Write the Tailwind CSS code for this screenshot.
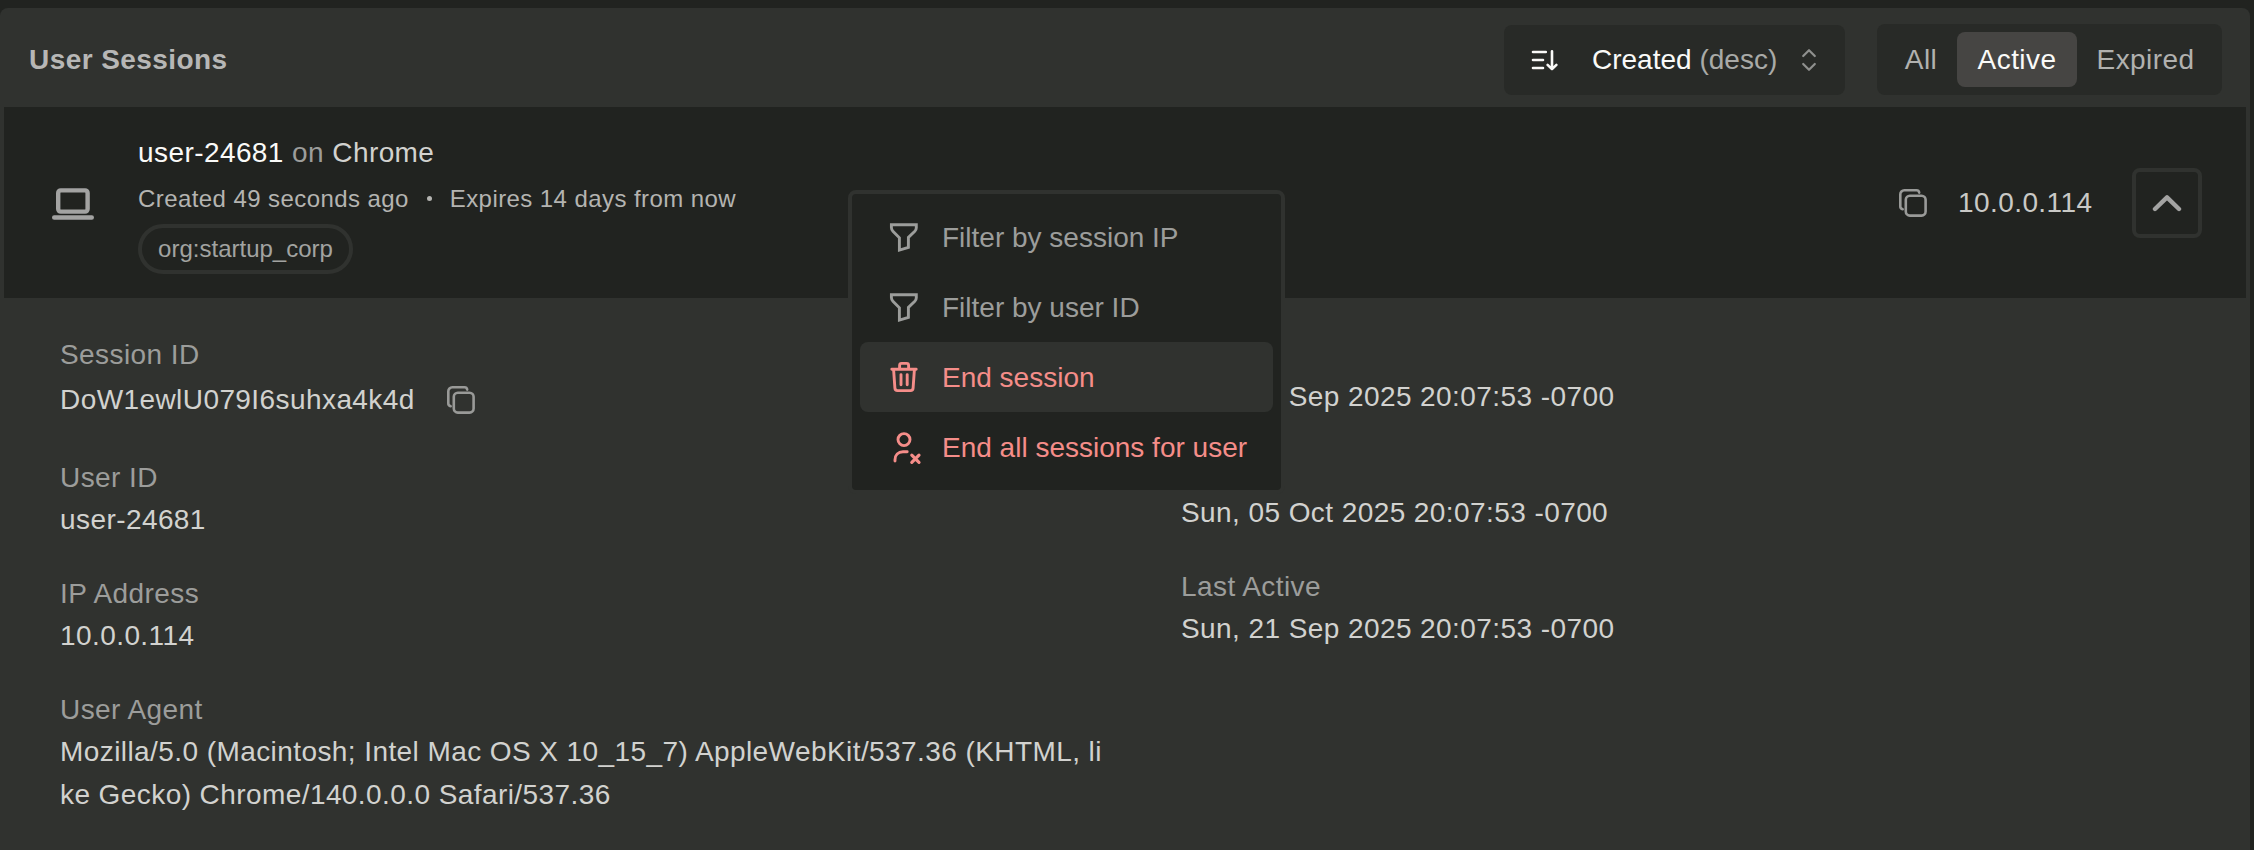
<!DOCTYPE html>
<html lang="en">
<head>
    <meta charset="UTF-8">
    <meta name="viewport" content="width=device-width, initial-scale=1.0">
    <title>User Sessions</title>
    <script src="https://cdn.jsdelivr.net/npm/@tailwindcss/browser@4"></script>
</head>
<body class="bg-[#212320] font-['Liberation_Sans',Arial,sans-serif] text-[28px] leading-[42px] tracking-[0.42px] text-[#d2d2cf]">

<!-- Shared icons -->
<svg class="hidden">
    <symbol id="icon-copy" viewBox="0 0 28 28">
        <rect x="6.8" y="6.8" width="19.8" height="19.8" rx="4"/>
        <path d="M20.2 3.6C19.9 1.9 19 1.3 17.6 1.3H5.3a4 4 0 0 0-4 4V17.6c0 1.4.8 2.3 2.4 2.6"/>
    </symbol>
    <symbol id="icon-filter" viewBox="0 0 32 32">
        <path d="M3.4 3.7h24.9v3c0 1.5-.5 2.6-1.5 3.6L20.4 16.4V26.5L11.4 29.1V16.8L4.9 10.2c-1-1-1.5-2.2-1.5-3.6z"/>
    </symbol>
</svg>

<div class="relative h-[850px] overflow-hidden pt-2 pr-1">
    <div class="h-full rounded-t-lg bg-[#30322f] px-1">

        <!-- Header -->
        <div class="flex h-[99px] items-start pt-4 pr-6 pl-[25px]">
            <h1 class="flex h-[71px] flex-1 items-center font-bold text-[#b7b7b6]">User Sessions</h1>
            <button class="mt-px mr-8 flex h-[70px] w-[341px] items-center rounded-lg bg-[#282a27] pl-[27px] tracking-normal">
                <svg class="size-[28px]" viewBox="0 0 28 28" fill="none" stroke="#fafaf8" stroke-width="2.6" stroke-linecap="round" stroke-linejoin="round">
                    <path d="M2 6h12.8M2 14h10M2 22h10M21 5.2V23M16.6 18.8L21 23.2l4.4-4.4"/>
                </svg>
                <span class="ml-[33px] text-[#fafaf8]">Created <span class="text-[#a9aaa7]">(desc)</span></span>
                <svg class="ml-auto mr-[28px] h-[24px] w-[16px]" viewBox="0 0 16 24" fill="none" stroke="#8f908e" stroke-width="2.2" stroke-linecap="round" stroke-linejoin="round">
                    <path d="M2.2 8L8 2.2 13.8 8M2.2 16L8 21.8l5.8-5.8"/>
                </svg>
            </button>
            <div class="flex h-[71px] w-[345px] rounded-lg bg-[#282a27] p-2 text-[#b1b1af]">
                <button class="w-[72px]">All</button>
                <button class="w-[120px] rounded-lg bg-[#464543] text-[#fafaf8]">Active</button>
                <button class="flex-1">Expired</button>
            </div>
        </div>

        <!-- Session row -->
        <div class="flex h-[191px] bg-[#212320] pt-6 pl-12">
            <svg class="mt-[56px] h-[34px] w-[42px]" viewBox="0 0 42 34" fill="none" stroke="#a3a3a2" stroke-width="4.4" stroke-linecap="round">
                <rect x="6.2" y="3.4" width="29.4" height="21.2" rx="2.5"/>
                <path d="M2.2 30.5h37.6"/>
            </svg>
            <div class="ml-[44px] flex-1">
                <div class="pt-px text-[#9c9d9b]"><span class="text-[#fafaf8]">user-24681</span> on <span class="text-[#d2d2cf]">Chrome</span></div>
                <div class="mt-[7px] flex items-center text-[24px] leading-[35px] text-[#b4b4b1]">
                    <span>Created 49 seconds ago</span>
                    <span class="mr-[18px] ml-[18px] size-[5px] rounded-full bg-[#b4b4b1]"></span>
                    <span>Expires 14 days from now</span>
                </div>
                <span class="mt-2 flex h-[50px] w-[215px] items-center justify-center rounded-full border-4 border-[#30322f] text-[24px] tracking-normal text-[#a2a3a1]">org:startup_corp</span>
            </div>
            <div class="mt-[37px] mr-[44px] flex h-[70px] items-center">
                <svg class="size-[28px]" fill="none" stroke="#999a98" stroke-width="2.6" stroke-linecap="round"><use href="#icon-copy"/></svg>
                <span class="ml-[31px] w-[174px] text-[#c9c9c6]">10.0.0.114</span>
                <button class="flex size-[70px] items-center justify-center rounded-lg border-4 border-[#30322f]">
                    <svg class="h-[18px] w-[30px]" viewBox="0 0 30 18" fill="none" stroke="#a3a3a2" stroke-width="4.4" stroke-linecap="round" stroke-linejoin="round">
                        <path d="M3 15L15 3.4 27 15"/>
                    </svg>
                </button>
            </div>
        </div>

        <!-- Details -->
        <div class="grid grid-cols-[1048px_1fr] gap-x-[73px] pt-9 pl-14">
            <dl class="flex flex-col gap-8">
                <div>
                    <dt class="text-[#9c9d9b]">Session ID</dt>
                    <dd class="flex h-[49px] items-center pb-0.5">
                        <span>DoW1ewlU079I6suhxa4k4d</span>
                        <svg class="ml-8 size-[28px]" fill="none" stroke="#999a98" stroke-width="2.6" stroke-linecap="round"><use href="#icon-copy"/></svg>
                    </dd>
                </div>
                <div>
                    <dt class="text-[#9c9d9b]">User ID</dt>
                    <dd>user-24681</dd>
                </div>
                <div>
                    <dt class="text-[#9c9d9b]">IP Address</dt>
                    <dd>10.0.0.114</dd>
                </div>
                <div>
                    <dt class="text-[#9c9d9b]">User Agent</dt>
                    <dd class="-mt-px leading-[43px] break-all">Mozilla/5.0 (Macintosh; Intel Mac OS X 10_15_7) AppleWebKit/537.36 (KHTML, like Gecko) Chrome/140.0.0.0 Safari/537.36</dd>
                </div>
            </dl>
            <dl class="flex flex-col gap-8">
                <div>
                    <dt class="text-[#9c9d9b]">Created</dt>
                    <dd>Sun, 21 Sep 2025 20:07:53 -0700</dd>
                </div>
                <div>
                    <dt class="text-[#9c9d9b]">Expires</dt>
                    <dd>Sun, 05 Oct 2025 20:07:53 -0700</dd>
                </div>
                <div>
                    <dt class="text-[#9c9d9b]">Last Active</dt>
                    <dd>Sun, 21 Sep 2025 20:07:53 -0700</dd>
                </div>
            </dl>
        </div>
    </div>

    <!-- Context menu -->
    <div class="absolute top-[190px] left-[848px] h-[304px] w-[437px] rounded-lg border-4 border-[#30322f] bg-[#212320] p-2 tracking-normal text-[#9c9d9b]">
        <div class="flex h-[70px] items-center gap-[22px] pl-7">
            <svg class="size-8" fill="none" stroke="currentColor" stroke-width="2.9"><use href="#icon-filter"/></svg>
            <span class="pt-0.5">Filter by session IP</span>
        </div>
        <div class="flex h-[70px] items-center gap-[22px] pl-7">
            <svg class="size-8" fill="none" stroke="currentColor" stroke-width="2.9"><use href="#icon-filter"/></svg>
            <span class="pt-0.5">Filter by user ID</span>
        </div>
        <div class="flex h-[70px] items-center gap-[22px] rounded-lg bg-[#30322f] pl-7 text-[#f58d89]">
            <svg class="size-8" viewBox="0 0 32 32" fill="none" stroke="currentColor" stroke-width="2.9" stroke-linecap="round" stroke-linejoin="round">
                <path d="M3.8 8.3h24.4M11.6 8V4.4a2 2 0 0 1 2-2h5a2 2 0 0 1 2 2V8"/>
                <path d="M5.6 8.6l1.3 18.6a2.6 2.6 0 0 0 2.6 2.4h13a2.6 2.6 0 0 0 2.6-2.4l1.3-18.6M13 13.6v10.2M19.2 13.6v10.2"/>
            </svg>
            <span class="pt-0.5">End session</span>
        </div>
        <div class="flex h-[70px] items-center gap-[22px] pl-7 text-[#f58d89]">
            <svg class="size-8 overflow-visible" viewBox="0 0 32 32" fill="none" stroke="currentColor" stroke-width="2.9" stroke-linecap="round">
                <circle cx="16" cy="8.6" r="6"/>
                <path d="M7 30V28.8c0-4.8 3.2-8 8-8h4.2"/>
                <path d="M23.8 24.1l7.2 7.2M31 24.1l-7.2 7.2" stroke-width="3.2"/>
            </svg>
            <span class="pt-0.5">End all sessions for user</span>
        </div>
    </div>
</div>

</body>
</html>
